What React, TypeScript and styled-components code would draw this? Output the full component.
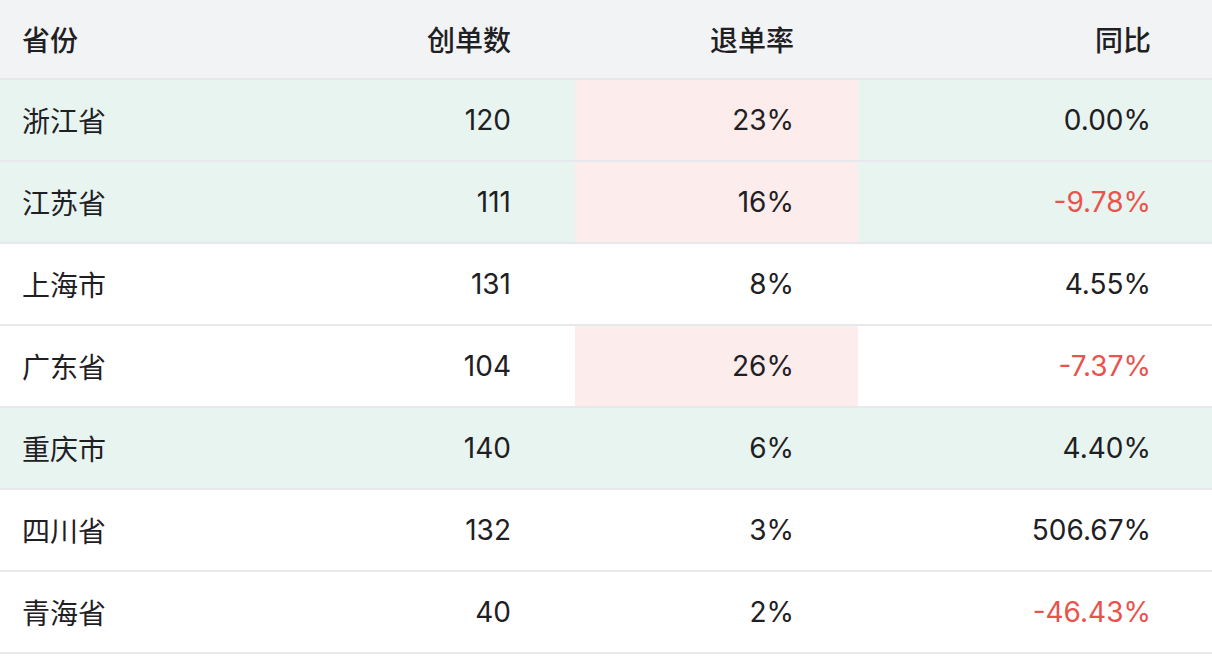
import React from 'react';
import styled, { createGlobalStyle } from 'styled-components';

const COLOR = {
  text: '#1f2023',
  red: '#e9534b',
  header: '#f2f3f5',
  border: '#e7e8ec',
  green: '#e8f4f0',
  pink: '#fcecec',
  white: '#ffffff',
};

const GlobalStyle = createGlobalStyle`
  html, body {
    margin: 0;
    padding: 0;
    background: ${COLOR.white};
  }
  body {
    font-family: Inter, "Noto Sans CJK SC", sans-serif;
    color: ${COLOR.text};
  }
`;

const StyledTable = styled.table`
  width: 1212px;
  border-collapse: collapse;
  table-layout: fixed;
  font-size: 28px;

  th:last-child,
  td:last-child {
    padding-right: 61px;
  }
`;

const HeadCell = styled.th<{ $align?: 'left' | 'right' }>`
  height: 78px;
  padding: 0 64px 0 22px;
  background: ${COLOR.header};
  border-bottom: 2px solid ${COLOR.border};
  font-weight: 500;
  text-align: ${({ $align }) => $align ?? 'right'};
`;

const Row = styled.tr<{ $highlight?: boolean }>`
  background: ${({ $highlight }) => ($highlight ? COLOR.green : COLOR.white)};
  border-bottom: 2px solid ${COLOR.border};
`;

const Cell = styled.td<{ $align?: 'left' | 'right'; $warn?: boolean; $negative?: boolean }>`
  height: 80px;
  padding: 0 64px 0 22px;
  text-align: ${({ $align }) => $align ?? 'right'};
  background: ${({ $warn }) => ($warn ? COLOR.pink : 'transparent')};
  color: ${({ $negative }) => ($negative ? COLOR.red : COLOR.text)};
  font-weight: 400;
`;

interface ProvinceRow {
  province: string;
  orders: number;
  refundRate: number;
  yoy: string;
  highlight?: boolean;
}

const rows: ProvinceRow[] = [
  { province: '浙江省', orders: 120, refundRate: 23, yoy: '0.00%', highlight: true },
  { province: '江苏省', orders: 111, refundRate: 16, yoy: '-9.78%', highlight: true },
  { province: '上海市', orders: 131, refundRate: 8, yoy: '4.55%' },
  { province: '广东省', orders: 104, refundRate: 26, yoy: '-7.37%' },
  { province: '重庆市', orders: 140, refundRate: 6, yoy: '4.40%', highlight: true },
  { province: '四川省', orders: 132, refundRate: 3, yoy: '506.67%' },
  { province: '青海省', orders: 40, refundRate: 2, yoy: '-46.43%' },
];

const App = () => {
  return (
    <>
      <GlobalStyle />
      <StyledTable>
        <colgroup>
          <col style={{ width: 292 }} />
          <col style={{ width: 283 }} />
          <col style={{ width: 283 }} />
          <col />
        </colgroup>
        <thead>
          <tr>
            <HeadCell $align="left">省份</HeadCell>
            <HeadCell>创单数</HeadCell>
            <HeadCell>退单率</HeadCell>
            <HeadCell>同比</HeadCell>
          </tr>
        </thead>
        <tbody>
          {rows.map((row) => (
            <Row key={row.province} $highlight={row.highlight}>
              <Cell $align="left">{row.province}</Cell>
              <Cell>{row.orders}</Cell>
              <Cell $warn={row.refundRate >= 15}>{row.refundRate}%</Cell>
              <Cell $negative={row.yoy.startsWith('-')}>{row.yoy}</Cell>
            </Row>
          ))}
        </tbody>
      </StyledTable>
    </>
  );
};

export default App;
